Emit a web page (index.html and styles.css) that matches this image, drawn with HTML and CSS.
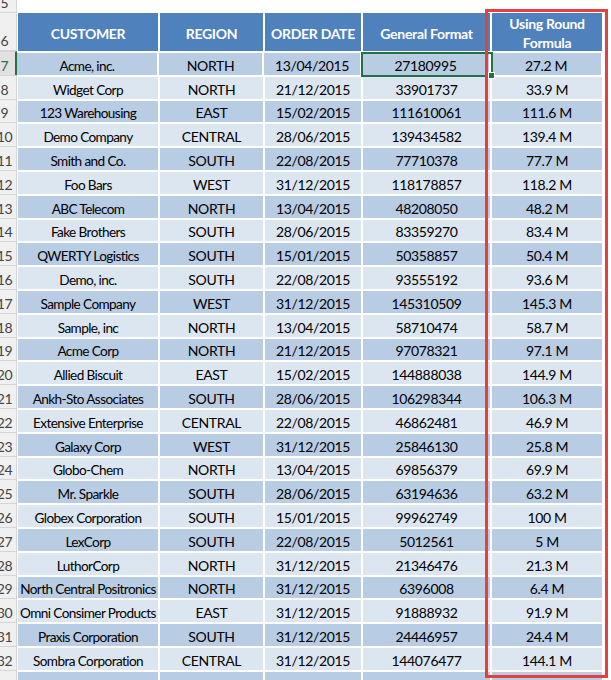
FILE: index.html
```html
<!DOCTYPE html>
<html>
<head>
<meta charset="utf-8">
<link rel="stylesheet" href="styles.css">
</head>
<body>
<div class="sheet">
  <div class="row row-top"><div class="rn"><span>5</span></div></div>
  <div class="row row-head">
    <div class="rn"><span>6</span></div>
    <div class="c c1">CUSTOMER</div>
    <div class="c c2">REGION</div>
    <div class="c c3">ORDER DATE</div>
    <div class="c c4">General Format</div>
    <div class="c c5 two">Using Round<br>Formula</div>
  </div>
  <div class="row d sel"><div class="rn"><span>7</span></div><div class="c c1">Acme, inc.</div><div class="c c2">NORTH</div><div class="c c3">13/04/2015</div><div class="c c4">27180995</div><div class="c c5">27.2 M</div></div>
  <div class="row l"><div class="rn"><span>8</span></div><div class="c c1">Widget Corp</div><div class="c c2">NORTH</div><div class="c c3">21/12/2015</div><div class="c c4">33901737</div><div class="c c5">33.9 M</div></div>
  <div class="row d"><div class="rn"><span>9</span></div><div class="c c1">123 Warehousing</div><div class="c c2">EAST</div><div class="c c3">15/02/2015</div><div class="c c4">111610061</div><div class="c c5">111.6 M</div></div>
  <div class="row l"><div class="rn"><span>10</span></div><div class="c c1">Demo Company</div><div class="c c2">CENTRAL</div><div class="c c3">28/06/2015</div><div class="c c4">139434582</div><div class="c c5">139.4 M</div></div>
  <div class="row d"><div class="rn"><span>11</span></div><div class="c c1">Smith and Co.</div><div class="c c2">SOUTH</div><div class="c c3">22/08/2015</div><div class="c c4">77710378</div><div class="c c5">77.7 M</div></div>
  <div class="row l"><div class="rn"><span>12</span></div><div class="c c1">Foo Bars</div><div class="c c2">WEST</div><div class="c c3">31/12/2015</div><div class="c c4">118178857</div><div class="c c5">118.2 M</div></div>
  <div class="row d"><div class="rn"><span>13</span></div><div class="c c1">ABC Telecom</div><div class="c c2">NORTH</div><div class="c c3">13/04/2015</div><div class="c c4">48208050</div><div class="c c5">48.2 M</div></div>
  <div class="row l"><div class="rn"><span>14</span></div><div class="c c1">Fake Brothers</div><div class="c c2">SOUTH</div><div class="c c3">28/06/2015</div><div class="c c4">83359270</div><div class="c c5">83.4 M</div></div>
  <div class="row d"><div class="rn"><span>15</span></div><div class="c c1">QWERTY Logistics</div><div class="c c2">SOUTH</div><div class="c c3">15/01/2015</div><div class="c c4">50358857</div><div class="c c5">50.4 M</div></div>
  <div class="row l"><div class="rn"><span>16</span></div><div class="c c1">Demo, inc.</div><div class="c c2">SOUTH</div><div class="c c3">22/08/2015</div><div class="c c4">93555192</div><div class="c c5">93.6 M</div></div>
  <div class="row d"><div class="rn"><span>17</span></div><div class="c c1">Sample Company</div><div class="c c2">WEST</div><div class="c c3">31/12/2015</div><div class="c c4">145310509</div><div class="c c5">145.3 M</div></div>
  <div class="row l"><div class="rn"><span>18</span></div><div class="c c1">Sample, inc</div><div class="c c2">NORTH</div><div class="c c3">13/04/2015</div><div class="c c4">58710474</div><div class="c c5">58.7 M</div></div>
  <div class="row d"><div class="rn"><span>19</span></div><div class="c c1">Acme Corp</div><div class="c c2">NORTH</div><div class="c c3">21/12/2015</div><div class="c c4">97078321</div><div class="c c5">97.1 M</div></div>
  <div class="row l"><div class="rn"><span>20</span></div><div class="c c1">Allied Biscuit</div><div class="c c2">EAST</div><div class="c c3">15/02/2015</div><div class="c c4">144888038</div><div class="c c5">144.9 M</div></div>
  <div class="row d"><div class="rn"><span>21</span></div><div class="c c1">Ankh-Sto Associates</div><div class="c c2">SOUTH</div><div class="c c3">28/06/2015</div><div class="c c4">106298344</div><div class="c c5">106.3 M</div></div>
  <div class="row l"><div class="rn"><span>22</span></div><div class="c c1">Extensive Enterprise</div><div class="c c2">CENTRAL</div><div class="c c3">22/08/2015</div><div class="c c4">46862481</div><div class="c c5">46.9 M</div></div>
  <div class="row d"><div class="rn"><span>23</span></div><div class="c c1">Galaxy Corp</div><div class="c c2">WEST</div><div class="c c3">31/12/2015</div><div class="c c4">25846130</div><div class="c c5">25.8 M</div></div>
  <div class="row l"><div class="rn"><span>24</span></div><div class="c c1">Globo-Chem</div><div class="c c2">NORTH</div><div class="c c3">13/04/2015</div><div class="c c4">69856379</div><div class="c c5">69.9 M</div></div>
  <div class="row d"><div class="rn"><span>25</span></div><div class="c c1">Mr. Sparkle</div><div class="c c2">SOUTH</div><div class="c c3">28/06/2015</div><div class="c c4">63194636</div><div class="c c5">63.2 M</div></div>
  <div class="row l"><div class="rn"><span>26</span></div><div class="c c1">Globex Corporation</div><div class="c c2">SOUTH</div><div class="c c3">15/01/2015</div><div class="c c4">99962749</div><div class="c c5">100 M</div></div>
  <div class="row d"><div class="rn"><span>27</span></div><div class="c c1">LexCorp</div><div class="c c2">SOUTH</div><div class="c c3">22/08/2015</div><div class="c c4">5012561</div><div class="c c5">5 M</div></div>
  <div class="row l"><div class="rn"><span>28</span></div><div class="c c1">LuthorCorp</div><div class="c c2">NORTH</div><div class="c c3">31/12/2015</div><div class="c c4">21346476</div><div class="c c5">21.3 M</div></div>
  <div class="row d"><div class="rn"><span>29</span></div><div class="c c1">North Central Positronics</div><div class="c c2">NORTH</div><div class="c c3">31/12/2015</div><div class="c c4">6396008</div><div class="c c5">6.4 M</div></div>
  <div class="row l"><div class="rn"><span>30</span></div><div class="c c1">Omni Consimer Products</div><div class="c c2">EAST</div><div class="c c3">31/12/2015</div><div class="c c4">91888932</div><div class="c c5">91.9 M</div></div>
  <div class="row d"><div class="rn"><span>31</span></div><div class="c c1">Praxis Corporation</div><div class="c c2">SOUTH</div><div class="c c3">31/12/2015</div><div class="c c4">24446957</div><div class="c c5">24.4 M</div></div>
  <div class="row l"><div class="rn"><span>32</span></div><div class="c c1">Sombra Corporation</div><div class="c c2">CENTRAL</div><div class="c c3">31/12/2015</div><div class="c c4">144076477</div><div class="c c5">144.1 M</div></div>
  <div class="row d"><div class="rn"><span>33</span></div><div class="c c1"></div><div class="c c2"></div><div class="c c3"></div><div class="c c4"></div><div class="c c5"></div></div>

  <div class="selbox"><div class="handle"></div></div>
  <div class="redbox"></div>
</div>
</body>
</html>
```

FILE: styles.css
```css
html, body {
  margin: 0;
  padding: 0;
  background: #ffffff;
  overflow: hidden;
}
body {
  width: 611px;
  height: 680px;
  font-family: Lato, "Liberation Sans", sans-serif;
  font-size: 14px;
  color: #000;
}
.sheet {
  position: relative;
  width: 611px;
  height: 680px;
  overflow: hidden;
}
.row {
  display: flex;
  align-items: stretch;
  margin-top: 2px;
  height: 21.8px;
}
.row-top {
  margin-top: 0;
  height: 13px;
}
.row-head {
  margin-top: 0;
  height: 38px;
}
.rn {
  box-sizing: border-box;
  width: 17px;
  flex: none;
  margin-top: -2px;
  background: #f0f0f0;
  border-top: 1px solid #d5d5d5;
  border-right: 1px solid #d5d5d5;
  overflow: hidden;
  display: flex;
  align-items: flex-end;
  color: #444;
  font-size: 14px;
  line-height: 18px;
}
.row-top .rn, .row-head .rn {
  margin-top: 0;
  border-top: 0;
  border-bottom: 1px solid #d5d5d5;
}
.rn span {
  flex: none;
  width: 25px;
  margin-left: -8px;
  text-align: center;
  letter-spacing: -0.3px;
}
.sel .rn {
  background: #e1e1e1;
  border-right: 2px solid #217346;
  color: #217346;
}
.c {
  box-sizing: border-box;
  flex: none;
  margin-left: 2px;
  display: flex;
  align-items: flex-end;
  justify-content: center;
  white-space: nowrap;
  line-height: 18px;
  letter-spacing: -0.35px;
}
.c1 {
  width: 140px;
  margin-left: 1px;
  font-size: 13.6px;
  letter-spacing: -0.6px;
}
.c2 { width: 103px; }
.c3 { width: 96px; }
.c4 { width: 127px; }
.c5 { width: 110px; }
.sel .c1 { margin-left: 0; }

.d .c { background: #b8cce4; }
.l .c { background: #dce6f1; }

.row-head .c {
  background: #4f81bd;
  color: #fff;
  font-weight: bold;
  font-size: 14px;
  align-items: center;
  padding-top: 3px;
  letter-spacing: -0.3px;
}
.row-head .c.two {
  text-align: center;
  line-height: 19px;
  padding-top: 1px;
}

.selbox {
  position: absolute;
  left: 361px;
  top: 52px;
  width: 132px;
  height: 25px;
  box-sizing: border-box;
  border: 2px solid #217346;
}
.handle {
  position: absolute;
  right: -4px;
  bottom: -4px;
  width: 5px;
  height: 5px;
  background: #217346;
  border: 1px solid #fff;
}
.redbox {
  position: absolute;
  left: 485px;
  top: 9px;
  width: 123px;
  height: 669px;
  box-sizing: border-box;
  border: 3px solid #e5403e;
}
```
